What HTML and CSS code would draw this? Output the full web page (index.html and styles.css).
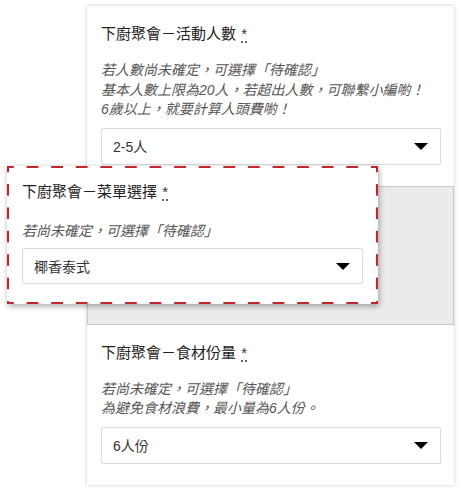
FILE: index.html
```html
<!DOCTYPE html>
<html lang="zh-Hant">
<head>
<meta charset="utf-8">
<title>下廚聚會</title>
<link rel="stylesheet" href="styles.css">
</head>
<body>
<div class="stage">
  <div class="card">
    <section class="field">
      <h3 class="field-title">下廚聚會－活動人數 <abbr class="req" title="必填">*</abbr></h3>
      <p class="field-desc">若人數尚未確定，可選擇「待確認」<br>基本人數上限為20人，若超出人數，可聯繫小編喲！<br>6歲以上，就要計算人頭費喲！</p>
      <div class="select"><span>2-5人</span><i class="caret"></i></div>
    </section>
    <div class="placeholder"></div>
    <section class="field">
      <h3 class="field-title">下廚聚會－食材份量 <abbr class="req" title="必填">*</abbr></h3>
      <p class="field-desc">若尚未確定，可選擇「待確認」<br>為避免食材浪費，最小量為6人份。</p>
      <div class="select"><span>6人份</span><i class="caret"></i></div>
    </section>
  </div>

  <section class="field dragging">
    <h3 class="field-title">下廚聚會－菜單選擇 <abbr class="req" title="必填">*</abbr></h3>
    <p class="field-desc">若尚未確定，可選擇「待確認」</p>
    <div class="select"><span>椰香泰式</span><i class="caret"></i></div>
  </section>
</div>
</body>
</html>
```
FILE: styles.css
```css
html, body {
  margin: 0;
  padding: 0;
  background: #fff;
}
body {
  font-family: "Liberation Sans", "Noto Sans CJK TC", sans-serif;
  color: #333;
}
.stage {
  position: relative;
  width: 461px;
  height: 494px;
}
.card {
  margin: 6px 0 0 87px;
  width: 367px;
  background: #fff;
  box-shadow: 0 0 4px rgba(0, 0, 0, 0.22);
}
.field {
  padding: 18px 13px 21px 14px;
}
.field-title {
  margin: 0;
  font-size: 15px;
  line-height: 20px;
  font-weight: normal;
  color: #222;
}
.req {
  text-decoration: underline dotted;
  text-underline-offset: 3px;
  color: #333;
  margin-left: 1px;
}
.field-desc {
  margin: 17px 0 0;
  font-size: 14px;
  line-height: 19.5px;
  font-style: italic;
  color: #555;
}
.select {
  margin-top: 8px;
  height: 37px;
  box-sizing: border-box;
  border: 1px solid #dcdcdc;
  border-radius: 2px;
  background: #fff;
  display: flex;
  align-items: center;
  justify-content: space-between;
  padding: 0 12px 0 11px;
  font-size: 14px;
  color: #333;
}
.caret {
  width: 0;
  height: 0;
  border-left: 7px solid transparent;
  border-right: 7px solid transparent;
  border-top: 7px solid #000;
  margin-top: 1px;
}
.placeholder {
  height: 139px;
  box-sizing: border-box;
  background: #ebebeb;
  border: 1px solid #c9c9c9;
}
.dragging {
  position: absolute;
  left: 7px;
  top: 160px;
  width: 371px;
  height: 138px;
  box-sizing: border-box;
  padding: 16px 15px 0 15px;
  background-color: #fff;
  background-image:
    linear-gradient(90deg, #c4262e 12px, transparent 12px),
    linear-gradient(90deg, #c4262e 12px, transparent 12px),
    linear-gradient(180deg, #c4262e 11.5px, transparent 11.5px),
    linear-gradient(180deg, #c4262e 11.5px, transparent 11.5px);
  background-size: 24.6px 2px, 24.6px 2px, 2px 23.4px, 2px 23.4px;
  background-repeat: repeat-x, repeat-x, repeat-y, repeat-y;
  background-position: -5px 0, -5px 100%, 0 18px, 100% 18px;
  box-shadow: 1px 2px 6px rgba(0, 0, 0, 0.35);
}
.dragging .field-desc {
  margin-top: 20px;
}
.dragging .select {
  margin-top: 6px;
  height: 36px;
}
```
